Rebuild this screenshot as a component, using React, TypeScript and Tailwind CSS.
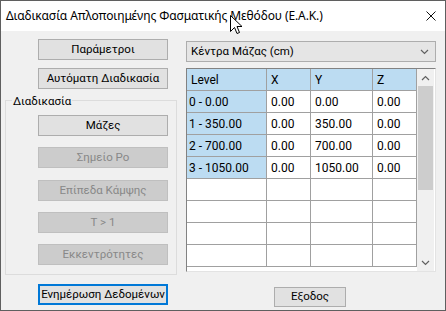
import React from "react";

const body = { fontFamily: 'Roboto, "Noto Sans", sans-serif' };

const btn =
  "h-[21px] w-[130px] flex items-center justify-center border text-[11.5px] leading-none whitespace-nowrap";
const normal = `${btn} bg-[#e1e1e1] border-[#adadad] text-black`;
const disabled = `${btn} bg-[#cccccc] border-[#bfbfbf] text-[#888888]`;

const rows = [
  ["0 - 0.00", "0.00", "0.00", "0.00"],
  ["1 - 350.00", "0.00", "350.00", "0.00"],
  ["2 - 700.00", "0.00", "700.00", "0.00"],
  ["3 - 1050.00", "0.00", "1050.00", "0.00"],
  ["", "", "", ""],
  ["", "", "", ""],
  ["", "", "", ""],
  ["", "", "", ""],
];

const widths = ["w-[80px]", "w-[44px]", "w-[62px]", "w-[44px]"];

function Chevron({ up }: { up?: boolean }) {
  return (
    <svg width="9" height="6" viewBox="0 0 9 6">
      <path
        d={up ? "M1 5 L4.5 1.5 L8 5" : "M1 1 L4.5 4.5 L8 1"}
        fill="none"
        stroke="#606060"
        strokeWidth="1.2"
      />
    </svg>
  );
}

export default function App() {
  return (
    <div
      className="relative w-[446px] h-[311px] border border-[#5f5f5f] bg-[#f0f0f0] flex flex-col overflow-hidden"
      style={{ fontFamily: '"Noto Sans", "Open Sans", sans-serif' }}
    >
      {/* Title bar */}
      <div className="h-[30px] bg-white flex items-center shrink-0">
        <span className="ml-[5px] text-[12px] text-black tracking-[-0.1px]">
          Διαδικασία Απλοποιημένης Φασματικής Μεθόδου (Ε.Α.Κ.)
        </span>
        <svg
          className="ml-auto mr-[9px]"
          width="10"
          height="10"
          viewBox="0 0 10 10"
        >
          <path d="M0.5 0.5 L9.5 9.5 M9.5 0.5 L0.5 9.5" stroke="#111" strokeWidth="1" />
        </svg>
      </div>

      {/* Body */}
      <div className="flex flex-1" style={body}>
        {/* Left column */}
        <div className="w-[185px] flex flex-col shrink-0">
          <div className={`${normal} ml-[37px] mt-[8px]`}>Παράμετροι</div>
          <div className={`${normal} ml-[37px] mt-[8px]`}>Αυτόματη Διαδικασία</div>

          <div className="relative ml-[4px] mt-[11px] w-[172px] h-[175px] border border-[#dcdcdc] flex flex-col">
            <span className="absolute -top-[8px] left-[6px] bg-[#f0f0f0] px-[1px] text-[11.5px] leading-[16px] text-black">
              Διαδικασία
            </span>
            <div className={`${normal} ml-[32px] mt-[14px]`}>Μάζες</div>
            <div className={`${disabled} ml-[32px] mt-[11px]`}>Σημείο Ρο</div>
            <div className={`${disabled} ml-[32px] mt-[12px]`}>Επίπεδα Κάμψης</div>
            <div className={`${disabled} ml-[32px] mt-[11px]`}>Τ &gt; 1</div>
            <div className={`${disabled} ml-[32px] mt-[11px]`}>Εκκεντρότητες</div>
          </div>

          <div
            className={`${btn} ml-[37px] mt-[9px] bg-[#e1e1e1] border-2 border-[#0078d7] text-black`}
          >
            Ενημέρωση Δεδομένων
          </div>
        </div>

        {/* Right column */}
        <div className="flex flex-col w-[251px]">
          <div className="mt-[10px] h-[21px] w-[250px] border border-[#adadad] bg-[#e5e5e5] flex items-center text-[11.5px] text-black">
            <span className="ml-[4px]">Κέντρα Μάζας (cm)</span>
            <span className="ml-auto mr-[6px] flex">
              <Chevron />
            </span>
          </div>

          {/* Grid */}
          <div className="mt-[6px] w-[250px] h-[204px] border-l border-t border-[#828282] border-r border-r-[#e3e3e3] border-b border-b-[#e3e3e3] bg-white flex overflow-hidden">
            <div className="flex flex-col w-[230px] overflow-hidden">
              <div className="flex h-[22px] shrink-0 border-b border-[#a0a0a0] bg-[#bcdcf2] text-[12px] text-black">
                {["Level", "X", "Y", "Z"].map((h, i) => (
                  <div
                    key={h}
                    className={`${widths[i]} shrink-0 border-r border-[#a0a0a0] flex items-center pl-[4px]`}
                  >
                    {h}
                  </div>
                ))}
              </div>
              {rows.map((r, ri) => (
                <div
                  key={ri}
                  className="flex h-[22px] shrink-0 border-b border-[#a0a0a0] text-[12px] text-black"
                >
                  {r.map((c, ci) => (
                    <div
                      key={ci}
                      className={`${widths[ci]} shrink-0 border-r border-[#a0a0a0] flex items-center ${
                        ci === 0 ? "pl-[2px]" : "pl-[4px]"
                      } ${ci === 0 && c ? "bg-[#bcdcf2]" : "bg-white"}`}
                    >
                      {c}
                    </div>
                  ))}
                </div>
              ))}
            </div>
            {/* Scrollbar */}
            <div className="w-[17px] shrink-0 bg-[#f0f0f0] flex flex-col items-center">
              <div className="h-[17px] flex items-center justify-center">
                <Chevron up />
              </div>
              <div className="w-[15px] h-[104px] bg-[#cdcdcd]" />
              <div className="mt-auto h-[17px] flex items-center justify-center">
                <Chevron />
              </div>
            </div>
          </div>

          <div className="mt-[15px] ml-[88px] h-[20px] w-[72px] border border-[#adadad] bg-[#e1e1e1] flex items-center justify-center text-[11.5px] text-black">
            Εξοδος
          </div>
        </div>
      </div>

      {/* Mouse cursor */}
      <svg
        className="absolute left-[229px] top-[14px]"
        width="13"
        height="20"
        viewBox="0 0 13 20"
      >
        <path
          d="M0.5 0.5 L0.5 16.5 L4.5 12.5 L7 18.5 L9.5 17.5 L7 11.5 L12 11.5 Z"
          fill="white"
          stroke="black"
          strokeWidth="1"
          strokeLinejoin="miter"
        />
      </svg>
    </div>
  );
}
